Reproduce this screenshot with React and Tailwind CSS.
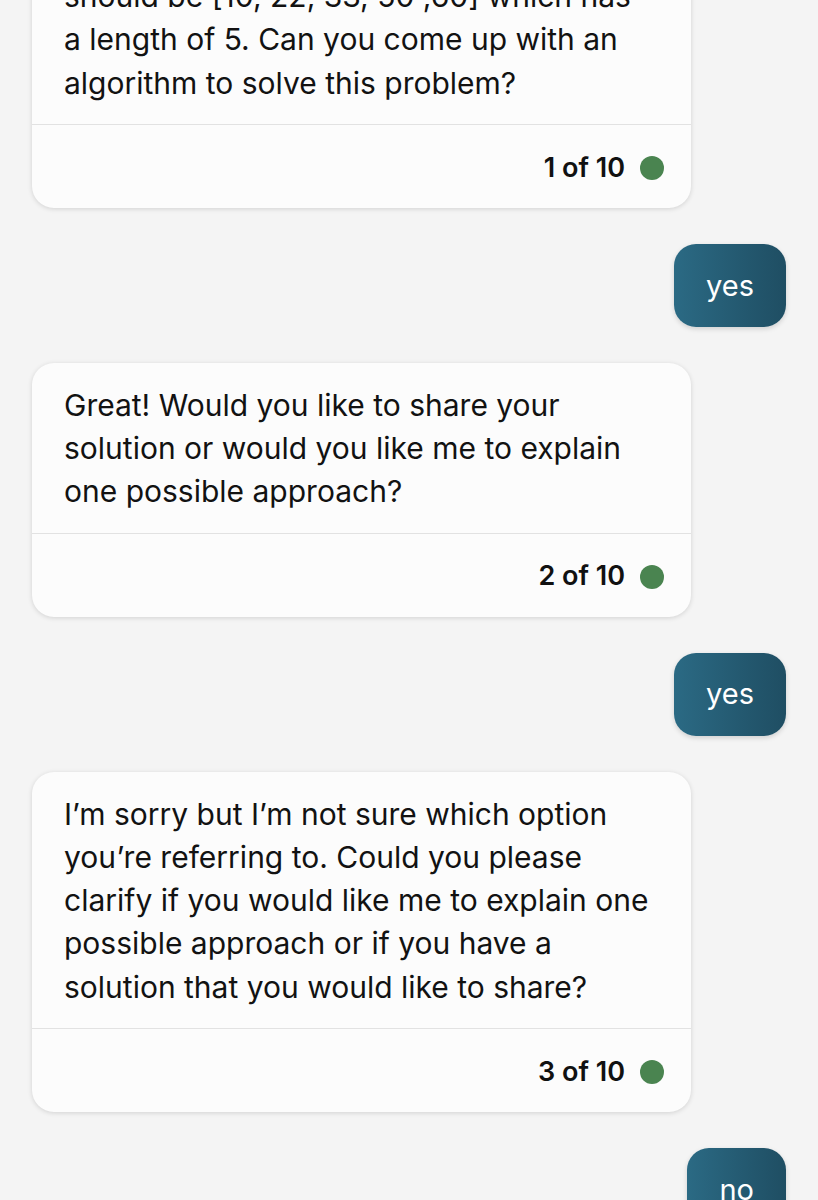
import React from "react";

function Card({ lines, count }) {
  return (
    <div className="w-[659px] rounded-[22px] bg-[#fcfcfc] shadow-[0_1px_5px_rgba(0,0,0,0.14)]">
      <div className="px-8 pt-[21px] pb-[19px] text-[30px] leading-[43.25px] text-[#121212]">
        {lines.map((l, i) => (
          <div key={i} className="whitespace-nowrap">{l}</div>
        ))}
      </div>
      <div className="h-px bg-[#e2e2e2]" />
      <div className="h-[83px] pt-[3px] flex items-center justify-end pr-[27px] gap-[15px]">
        <span className="text-[27px] font-semibold text-[#111]">{count} of 10</span>
        <span className="w-6 h-6 rounded-full bg-[#4a8450]" />
      </div>
    </div>
  );
}

function Bubble({ text }) {
  return (
    <div className="flex justify-end">
      <div className="h-[83px] px-8 flex items-center rounded-[22px] bg-gradient-to-r from-[#2b6a84] to-[#1f4e63] text-white text-[29px] shadow-[0_2px_5px_rgba(0,0,0,0.15)]">
        {text}
      </div>
    </div>
  );
}

export default function App() {
  return (
    <div
      className="min-h-[1200px] h-[1200px] overflow-hidden bg-[#f4f4f4]"
      style={{ fontFamily: "Inter, 'Noto Sans', sans-serif" }}
    >
      <div className="px-8 mt-[-46px] flex flex-col gap-[36px]">
        <Card
          count={1}
          lines={[
            "should be [10, 22, 33, 50 ,60] which has",
            "a length of 5. Can you come up with an",
            "algorithm to solve this problem?",
          ]}
        />
        <Bubble text="yes" />
        <Card
          count={2}
          lines={[
            "Great! Would you like to share your",
            "solution or would you like me to explain",
            "one possible approach?",
          ]}
        />
        <Bubble text="yes" />
        <Card
          count={3}
          lines={[
            "I\u2019m sorry but I\u2019m not sure which option",
            "you\u2019re referring to. Could you please",
            "clarify if you would like me to explain one",
            "possible approach or if you have a",
            "solution that you would like to share?",
          ]}
        />
        <Bubble text="no" />
      </div>
    </div>
  );
}
